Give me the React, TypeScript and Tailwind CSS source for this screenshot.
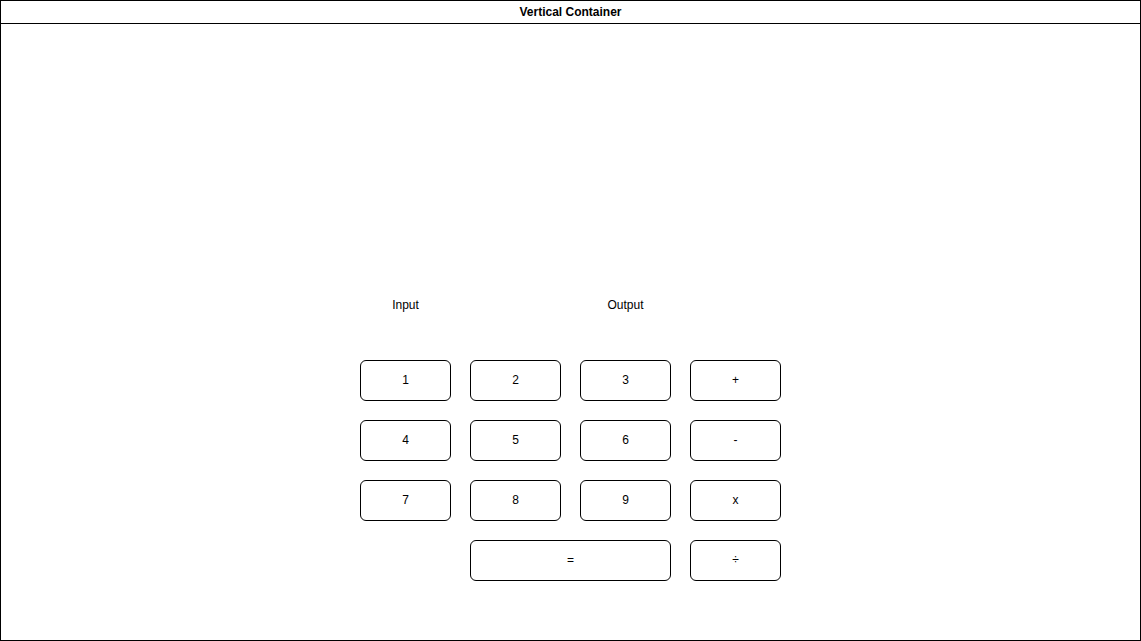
import React from "react";

const Btn = ({ label, className = "" }: { label: string; className?: string }) => (
  <div
    className={`h-[41px] border border-black rounded-[6px] flex items-center justify-center pb-[1px] text-[12px] text-black ${className}`}
  >
    {label}
  </div>
);

export default function App() {
  return (
    <div
      className="w-[1141px] h-[641px] border border-black bg-white flex flex-col"
      style={{ fontFamily: '"Liberation Sans", Arial, Helvetica, sans-serif' }}
    >
      <div className="h-[23px] shrink-0 border-b border-black flex items-center justify-center text-[12px] font-bold text-black">
        Vertical Container
      </div>
      <div className="flex-1 flex flex-col items-center pt-[274px]">
        <div className="grid grid-cols-[91px_91px_91px_91px] gap-x-[19px]">
          <div className="h-[14px] leading-[14px] text-[12px] text-center text-black">Input</div>
          <div />
          <div className="h-[14px] leading-[14px] text-[12px] text-center text-black">Output</div>
          <div />
        </div>
        <div className="mt-[48px] grid grid-cols-[91px_91px_91px_91px] gap-x-[19px] gap-y-[19px]">
          <Btn label="1" />
          <Btn label="2" />
          <Btn label="3" />
          <Btn label="+" />
          <Btn label="4" />
          <Btn label="5" />
          <Btn label="6" />
          <Btn label="-" />
          <Btn label="7" />
          <Btn label="8" />
          <Btn label="9" />
          <Btn label="x" />
          <div />
          <Btn label="=" className="col-span-2" />
          <Btn label="÷" />
        </div>
      </div>
    </div>
  );
}
